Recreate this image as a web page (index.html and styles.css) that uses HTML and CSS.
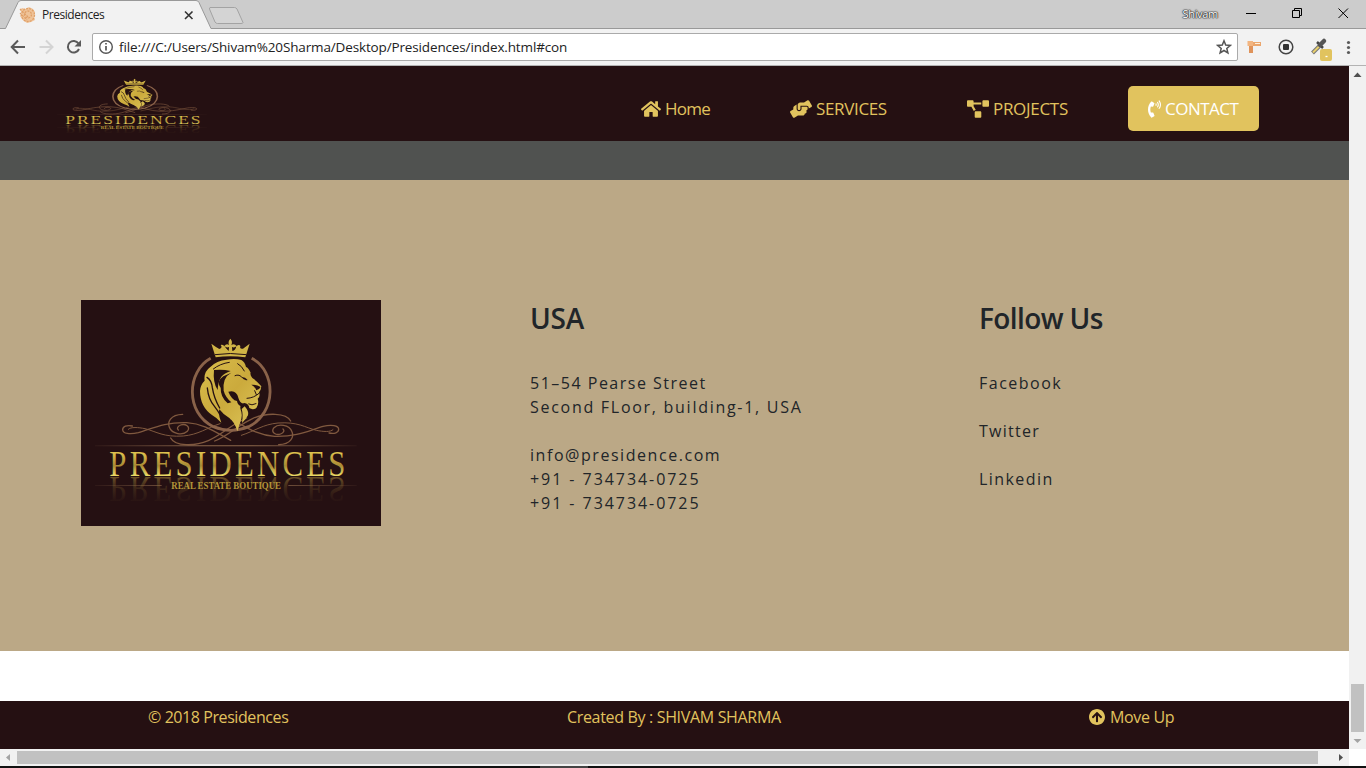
FILE: index.html
```html
<!DOCTYPE html>
<html lang="en">
<head>
<meta charset="utf-8">
<title>Presidences</title>
<link rel="stylesheet" href="styles.css">
</head>
<body>
<div class="tabstrip">
  <svg class="tabs" width="250" height="30" viewBox="0 0 250 30">
    <path d="M0 28.500H5.500L18 2.500Q19 .5 21 .5H196Q198 .5 199 2.500L211 28.500H250V30H0z" fill="#f2f2f2"/>
    <path d="M0 28.500H5.500L18 2.500Q19 .5 21 .5H196Q198 .5 199 2.500L211 28.500H250" fill="none" stroke="#999"/>
    <path d="M210 7.500H234.500Q236 7.500 237 9L243 22.500Q243 23.500 241 23.500H217.500Q216 23.500 215 22L209.500 9Q209.300 7.500 210.500 7.500z" fill="#d4d4d4" stroke="#a3a3a3"/>
    <path d="M22 8l4 1 3-2 4 2 2 3-1 4 1 4-4 2-4 1-4-3-3-4 2-3-2-3z" fill="#efc398"/>
    <g fill="none" stroke="#e0a068" stroke-width="1.300" stroke-dasharray="2 1.100"><circle cx="28" cy="15" r="6.500"/><circle cx="28" cy="14.500" r="3.500"/><path d="M20 9l8 8M20 13l7 7"/></g>
    <path d="M185 11.500l7.500 7.500M192.500 11.500L185 19" stroke="#333" stroke-width="1.600"/>
  </svg>
  <span class="tab-title">Presidences</span>
  <span class="user">Shivam</span>
  <svg class="winbtns" width="130" height="29" viewBox="1236 0 130 29" fill="none" stroke="#000">
    <path d="M1246 13.500h10"/><path d="M1292.500 10.500h7v7h-7zM1294.500 10.500v-2h7v7h-2"/><path d="M1338.500 8.500l9.500 9.500M1348 8.500l-9.500 9.500"/>
  </svg>
</div>
<div class="toolbar">
  <svg class="navbtns" width="92" height="36" viewBox="0 29 92 36" fill="none" stroke-width="2">
    <path d="M25 47H12M18 40.500L11.700 47l6.300 6.500" stroke="#5a5a5a"/>
    <path d="M39.500 47h13M46 40.500l6.500 6.500-6.500 6.500" stroke="#d4d4d4"/>
    <path d="M78.500 43.500A5.800 5.800 0 1 0 79 49" stroke="#5a5a5a"/><path d="M81 40v6.500h-6.500z" fill="#5a5a5a"/>
  </svg>
  <div class="address">
    <svg width="16" height="16" viewBox="0 0 16 16" fill="none" stroke="#555" stroke-width="1.400"><circle cx="8" cy="8" r="6.300"/><path d="M8 7v4.500M8 4v1.600" stroke-width="1.700"/></svg>
    <span class="url">file:///C:/Users/Shivam%20Sharma/Desktop/Presidences/index.html#con</span>
    <svg class="star" width="16" height="16" viewBox="0 0 16 16" fill="none" stroke="#555" stroke-width="1.500"><path d="M8 1.800l1.700 4.300 4.600.3-3.500 3 1.100 4.500L8 11.500l-3.900 2.400 1.100-4.500-3.500-3 4.600-.3z"/></svg>
  </div>
  <svg class="ext" width="128" height="36" viewBox="1238 29 128 36">
    <path d="M1251 42h10v4h-10z" fill="#eba66d"/><path d="M1249 41h4v12h-4z" fill="#df935b"/><path d="M1247.500 41h5.500v5h-5.500z" fill="#f2b581"/><path d="M1255 43.500h5" stroke="#fff0dc"/>
    <circle cx="1286" cy="47" r="6.800" fill="none" stroke="#444" stroke-width="1.500"/><rect x="1283" y="44" width="6" height="6" rx="1" fill="#333"/>
    <path d="M1312.500 53l8-8" stroke="#777" stroke-width="4"/><path d="M1313 52.500l6-6" stroke="#e9d06b" stroke-width="2"/><path d="M1317 42l6 6" stroke="#444" stroke-width="2.500"/><path d="M1320 45l4-4" stroke="#555" stroke-width="4.500" stroke-linecap="round"/>
    <rect x="1320" y="49" width="12" height="12" rx="2" fill="#e1c35e"/><path d="M1325.500 56.500h2" stroke="#fff" stroke-width="1.300"/>
    <g fill="#5a5a5a"><circle cx="1348.500" cy="42.500" r="1.600"/><circle cx="1348.500" cy="47.500" r="1.600"/><circle cx="1348.500" cy="52.500" r="1.600"/></g>
  </svg>
</div>

<div class="window">
  <div class="page">
    <nav class="nav">
      <svg class="nav-logo" viewBox="3 6 900 678" preserveAspectRatio="none"><use href="#brand"/></svg>
      <a class="link home"><svg width="20" height="18" viewBox="0 0 576 512"><path d="M488 312.700V456c0 13.300-10.700 24-24 24H348c-6.600 0-12-5.400-12-12V356c0-6.600-5.400-12-12-12h-72c-6.600 0-12 5.400-12 12v112c0 6.600-5.400 12-12 12H112c-13.300 0-24-10.700-24-24V312.700c0-3.600 1.600-7 4.400-9.300l188-154.800c4.400-3.600 10.800-3.600 15.300 0l188 154.800c2.700 2.300 4.300 5.700 4.300 9.300zm83.600-60.900L488 182.900V44.400c0-6.600-5.400-12-12-12h-56c-6.600 0-12 5.400-12 12V117l-89.500-73.700c-17.700-14.600-43.300-14.600-61 0L4.400 251.800c-5.100 4.200-5.800 11.800-1.600 16.900l25.500 31c4.200 5.100 11.800 5.800 16.900 1.600l235.200-193.700c4.400-3.600 10.800-3.600 15.300 0l235.200 193.700c5.100 4.200 12.700 3.500 16.900-1.600l25.500-31c4.200-5.200 3.400-12.700-1.700-16.900z"/></svg><span>Home</span></a>
      <a class="link services"><svg width="22" height="18" viewBox="0 0 640 512"><path d="M488 192H336v56c0 39.700-32.300 72-72 72s-72-32.300-72-72V126.400l-64.900 39C107.800 176.900 96 197.800 96 220.200v47.300l-80 46.200C.7 322.500-4.600 342.100 4.300 357.400l80 138.600c8.800 15.300 28.400 20.500 43.700 11.700L231.400 448H368c35.300 0 64-28.700 64-64h16c17.700 0 32-14.300 32-32v-64h8c13.300 0 24-10.700 24-24v-48c0-13.300-10.700-24-24-24zm147.700-37.400L555.700 16C546.900.7 527.300-4.500 512 4.300L408.600 64H306.400c-12 0-23.700 3.400-33.900 9.700L239 94.600c-9.400 5.800-15 16.100-15 27.100V248c0 22.100 17.900 40 40 40s40-17.900 40-40v-88h184c30.900 0 56 25.100 56 56v28.500l80-46.200c15.300-8.900 20.500-28.400 11.700-43.700z"/></svg><span>SERVICES</span></a>
      <a class="link projects"><svg width="22" height="18" viewBox="0 0 640 512"><path d="M384 320H256c-17.670 0-32 14.330-32 32v128c0 17.670 14.330 32 32 32h128c17.670 0 32-14.330 32-32V352c0-17.670-14.330-32-32-32zM192 32c0-17.670-14.330-32-32-32H32C14.330 0 0 14.330 0 32v128c0 17.670 14.330 32 32 32h95.720l73.160 128.040C211.980 300.980 232.400 288 256 288h.28L192 175.510V128h224V64H192V32zM608 0H480c-17.670 0-32 14.330-32 32v128c0 17.670 14.330 32 32 32h128c17.670 0 32-14.330 32-32V32c0-17.670-14.330-32-32-32z"/></svg><span>PROJECTS</span></a>
      <a class="link contact"><svg width="13" height="18" viewBox="0 0 384 512"><path d="M97.333 506.966c-129.874-129.874-129.681-340.252 0-469.933 5.698-5.698 14.527-6.632 21.263-2.422l64.817 40.513a17.187 17.187 0 0 1 6.849 20.958l-32.408 81.021a17.188 17.188 0 0 1-17.669 10.719l-55.810-5.580c-21.051 58.261-20.612 122.471 0 179.515l55.811-5.581a17.188 17.188 0 0 1 17.669 10.719l32.408 81.022a17.188 17.188 0 0 1-6.849 20.958l-64.817 40.513a17.190 17.190 0 0 1-21.265-2.422zM247.126 95.473c11.832 20.047 11.832 45.008 0 65.055-3.950 6.693-13.108 7.959-18.718 2.581l-5.975-5.726c-3.911-3.748-4.793-9.622-2.261-14.410a32.063 32.063 0 0 0 0-29.945c-2.533-4.788-1.650-10.662 2.261-14.410l5.975-5.726c5.610-5.378 14.768-4.112 18.718 2.581zm91.787-91.187c60.140 71.604 60.092 175.882 0 247.428-4.474 5.327-12.530 5.746-17.552.933l-5.798-5.557c-4.560-4.371-4.977-11.529-.930-16.379 49.687-59.538 49.646-145.933 0-205.422-4.047-4.850-3.631-12.008.930-16.379l5.798-5.557c5.022-4.813 13.078-4.394 17.552.933zm-45.972 44.941c36.050 46.322 36.108 111.149 0 157.546-4.390 5.641-12.697 6.251-17.856 1.304l-5.818-5.579c-4.400-4.219-4.998-11.095-1.285-15.931 26.536-34.564 26.534-82.572 0-117.134-3.713-4.836-3.115-11.711 1.285-15.931l5.818-5.579c5.159-4.947 13.466-4.337 17.856 1.304z"/></svg><span>CONTACT</span></a>
    </nav>
    <div class="strip"></div>
    <section class="info">
      <svg class="logo" width="300" height="226" viewBox="3 6 900 678">
        <defs>
          <linearGradient id="gold" x1="0" y1="0" x2="1" y2="1"><stop offset="0" stop-color="#d9bd4c"/><stop offset=".5" stop-color="#cbaa3c"/><stop offset="1" stop-color="#dfc95d"/></linearGradient>
          <linearGradient id="letters" gradientUnits="userSpaceOnUse" x1="0" y1="465" x2="0" y2="535"><stop offset="0" stop-color="#dcc24e"/><stop offset=".3" stop-color="#c0a03e"/><stop offset=".55" stop-color="#a88a35"/><stop offset="1" stop-color="#efdf68"/></linearGradient>
          <linearGradient id="mirror" gradientUnits="userSpaceOnUse" x1="0" y1="465" x2="0" y2="535"><stop offset="0" stop-color="#917332" stop-opacity=".05"/><stop offset=".5" stop-color="#917332" stop-opacity=".22"/><stop offset="1" stop-color="#a98a3a" stop-opacity=".55"/></linearGradient>
          <linearGradient id="rule" gradientUnits="userSpaceOnUse" x1="45" y1="0" x2="830" y2="0"><stop offset="0" stop-color="#8b664a" stop-opacity=".1"/><stop offset=".4" stop-color="#8b664a"/><stop offset=".6" stop-color="#8b664a"/><stop offset="1" stop-color="#8b664a" stop-opacity=".1"/></linearGradient>
          <g id="swirl" fill="none" stroke="#80593f" stroke-width="4" stroke-linecap="round">
            <path d="M157 384C140 380 128 386 128 395C128 407 150 410 175 404C215 393 250 372 320 374C375 377 410 405 452 427"/>
            <path d="M145 394C152 386 175 388 195 392C230 401 250 418 310 414C355 410 380 390 420 377" stroke-width="3"/>
            <path d="M308 349C270 350 262 373 268 388C276 410 310 412 322 400C334 386 315 376 302 381C292 385 290 392 295 396"/>
            <path d="M272 420C285 446 345 445 385 428C430 408 455 378 500 360"/>
          </g>
        </defs>
        <g id="brand">
          <use href="#swirl"/><use href="#swirl" transform="rotate(180 452 394.500)"/>
          <path d="M392 181C320 220 315 345 400 386Q453 408 506 386C590 345 590 220 515 181" fill="none" stroke="#8a6249" stroke-width="8.500"/>
          <path d="M407 178L394 137Q409 148 418 153Q429 149 422 141Q431 138 438 151L446 159L447 147Q440 151 433 144Q439 136 447 141Q443 130 451 122Q459 130 454 141Q463 136 470 144Q463 151 456 147L457 159Q467 157 469 145Q478 137 481 144Q478 154 489 152L509 137L496 178Q450 171 407 178z" fill="#d1b446"/>
          <path d="M405 170Q450 163 499 170" fill="none" stroke="#251012" stroke-width="3"/>
          <path d="M374 248Q370 222 391 207Q410 187 440 185Q465 180 484 186Q495 192 498 207Q505 209 512 224Q509 230 517 240Q531 249 544 265Q543 276 537 283Q542 295 533 302Q538 316 529 330Q518 337 508 330Q506 317 493 315Q477 319 482 335Q490 353 479 378L472 400Q465 373 448 360Q429 349 418 334Q414 352 424 374Q411 360 397 352Q360 326 360 279Q361 260 374 248z" fill="url(#gold)"/>
          <path d="M494 325Q508 341 504 352Q498 364 486 375Q490 349 485 333z" fill="#d4b94d"/>
          <g fill="#251012">
            <path d="M402 216Q428 213 452 219Q433 226 424 236Q414 250 413 276Q398 254 402 216z"/>
            <path d="M454 224Q427 238 431 278Q436 297 454 313L443 316Q421 297 422 270Q408 250 430 235z"/>
            <path d="M445 281Q469 274 475 299Q479 316 492 317L484 325Q472 321 471 309Q455 306 445 281z"/>
            <path d="M514 260Q530 259 542 267Q538 275 529 277Q525 265 514 260z"/>
            <path d="M485 237Q496 237 503 246Q492 250 485 237z"/>
          </g>
          <g fill="none" stroke="#251012" stroke-linecap="round" stroke-width="4">
            <path d="M381 238Q395 247 397 269Q402 301 419 330M382 270Q385 304 404 326Q412 336 420 350"/>
            <path d="M473 197Q486 204 493 219M448 193Q420 197 400 213" stroke-width="3"/>
            <path d="M537 286Q522 300 501 301M524 278L529 290M506 318Q515 324 528 317M465 233Q478 227 487 239" stroke-width="3"/>
          </g>
          <path d="M45 441.500H830V444.500H45zM45 561H245V564H45zM625 561H830V564H625z" fill="url(#rule)"/>
          <g transform="translate(88 0) scale(.87 1)" class="brand-name">
            <text x="0" y="533" textLength="814" fill="url(#letters)">PRESIDENCES</text>
            <text x="0" y="533" textLength="814" fill="url(#mirror)" transform="translate(0 1070) scale(1 -1)" aria-hidden="true">PRESIDENCES</text>
          </g>
          <text x="274" y="574" textLength="329" lengthAdjust="spacingAndGlyphs" class="brand-sub">REAL ESTATE BOUTIQUE</text>
        </g>
      </svg>
      <div class="col">
        <h2 class="usa">USA</h2>
        <p><span class="street">51–54 Pearse Street</span><br><span class="floor">Second FLoor, building-1, USA</span></p>
        <p><span class="mail">info@presidence.com</span><br><span class="phone">+91 - 734734-0725</span><br><span class="phone">+91 - 734734-0725</span></p>
      </div>
      <div class="col">
        <h2 class="follow">Follow Us</h2>
        <p class="facebook">Facebook</p>
        <p class="twitter">Twitter</p>
        <p class="linkedin">Linkedin</p>
      </div>
    </section>
    <footer class="footer">
      <span class="copy">© 2018 Presidences</span>
      <span class="by">Created By : SHIVAM SHARMA</span>
      <a class="up"><svg width="16" height="16" viewBox="8 8 496 496"><path d="M8 256C8 119 119 8 256 8s248 111 248 248-111 248-248 248S8 393 8 256zm143.600 28.900l72.400-75.400V392c0 13.300 10.700 24 24 24h16c13.300 0 24-10.700 24-24V209.400l72.400 75.400c9.300 9.700 24.800 9.900 34.300.4l10.900-11c9.400-9.400 9.400-24.600 0-33.900L273 107.700c-9.400-9.400-24.600-9.400-33.900 0L106.300 240.400c-9.400 9.400-9.400 24.600 0 33.900l10.900 11c9.600 9.500 25.100 9.300 34.400-.4z"/></svg><span>Move Up</span></a>
    </footer>
  </div>
  <div class="vscroll">
    <svg width="17" height="17"><path d="M4.500 11L8.500 6.500l4 4.500z" fill="#505050"/></svg>
    <div class="vthumb"></div>
    <svg width="17" height="17"><path d="M4.500 7l4 4 4-4z" fill="#a3a3a3"/></svg>
  </div>
</div>
<div class="hscroll">
  <svg width="17" height="17"><path d="M10 5v7L6 8.500z" fill="#a3a3a3"/></svg>
  <div class="hthumb"></div>
  <svg width="17" height="17"><path d="M7 5v7l4-3.500z" fill="#505050"/></svg>
</div>
<div class="taskbar"><div></div></div>
</body>
</html>
```
FILE: styles.css
```css
* { box-sizing: border-box; }
body { margin: 0; width: 1366px; height: 768px; overflow: hidden; display: flex; flex-direction: column; background: #fff; font-family: "Open Sans", "Noto Sans", sans-serif; }
svg { display: block; flex: none; }

/* Browser frame */
.tabstrip { height: 29px; flex: none; background: #ccc; border-bottom: 1px solid #999; position: relative; display: flex; font-size: 12px; line-height: 29px; }
.tabs { position: absolute; left: 0; top: 0; }
.tab-title { margin-left: 42px; position: relative; color: #222; letter-spacing: -0.45px; }
.user { margin-left: auto; margin-right: 18px; font-size: 11px; line-height: 28px; color: #fff; text-shadow: 0 0 1px #222, 0 0 2px #333, 0 0 1px #222, 0 0 1px #222; letter-spacing: -0.3px; }
.toolbar { height: 37px; flex: none; background: #f2f2f2; border-bottom: 1px solid #b3b3b3; display: flex; }
.address { width: 1146px; height: 28px; margin-top: 4px; padding: 0 5px; background: #fff; border: 1px solid #aaa; border-radius: 2px; display: flex; align-items: center; gap: 5px; color: #222; }
.url { font-size: 13.5px; letter-spacing: -0.14px; white-space: nowrap; }
.star { margin-left: auto; }

/* Page viewport */
.window { height: 683px; flex: none; display: flex; }
.page { width: 1349px; display: flex; flex-direction: column; }
.nav { height: 75px; flex: none; background: #251012; padding-left: 49px; display: grid; grid-template-columns: 592px 149px 177px 161px 131px; align-items: center; }
.nav-logo { width: 172px; height: 75px; }
.link { display: flex; align-items: center; gap: 4px; height: 45px; margin-top: 10px; color: #e1c35e; font-size: 17px; white-space: nowrap; }
.link svg, .up svg { fill: currentColor; }
.home span { letter-spacing: -0.75px; }
.services span { letter-spacing: -0.35px; }
.projects span { letter-spacing: -0.3px; }
.contact { background: #e1c35e; color: #fff; border-radius: 5px; padding-left: 20px; }
.contact span { letter-spacing: -0.5px; }
.strip { height: 39px; flex: none; background: #505250; }
.info { height: 471px; flex: none; background: #bba886; display: grid; grid-template-columns: 449px 449px auto; padding: 120px 0 0 81px; color: #212529; }
.brand-name { font: 106px "Liberation Serif", serif; }
.brand-sub { font: bold 30px "Liberation Serif", serif; fill: #b59739; }
.logo { background: #251012; }
.col h2 { margin: 0 0 35px; font-size: 28px; line-height: 36px; font-weight: 600; letter-spacing: -0.6px; }
.col .usa { letter-spacing: -0.2px; }
.col p { margin: 0 0 24px; font-size: 16px; line-height: 24px; white-space: nowrap; }
.street { letter-spacing: 1.5px; }
.floor { letter-spacing: 1.72px; }
.mail { letter-spacing: 1.55px; }
.phone { letter-spacing: 1.94px; }
.facebook { letter-spacing: 1.5px; }
.twitter { letter-spacing: 1.28px; }
.linkedin { letter-spacing: 1.43px; }

/* Footer */
.footer { height: 48px; margin-top: 50px; background: #251012; color: #e1c35e; display: grid; grid-template-columns: 419px 522px auto; padding-left: 148px; font-size: 16px; line-height: 33px; letter-spacing: -0.33px; white-space: nowrap; }
.copy { letter-spacing: -0.42px; }
.up { display: flex; gap: 5px; }
.up svg { margin-top: 8px; }

/* Scrollbars */
.vscroll { width: 17px; background: #f1f1f1; display: flex; flex-direction: column; }
.vthumb { width: 13px; height: 48px; margin: auto 2px 0; background: #c1c1c1; }
.hscroll { width: 1349px; height: 17px; flex: none; background: #f1f1f1; display: flex; }
.hthumb { width: 1301px; height: 13px; margin: 2px auto 0 0; background: #c1c1c1; }
.taskbar { height: 2px; background: #111; }
.taskbar div { width: 48px; height: 2px; margin-left: 540px; background: #444; }
```
